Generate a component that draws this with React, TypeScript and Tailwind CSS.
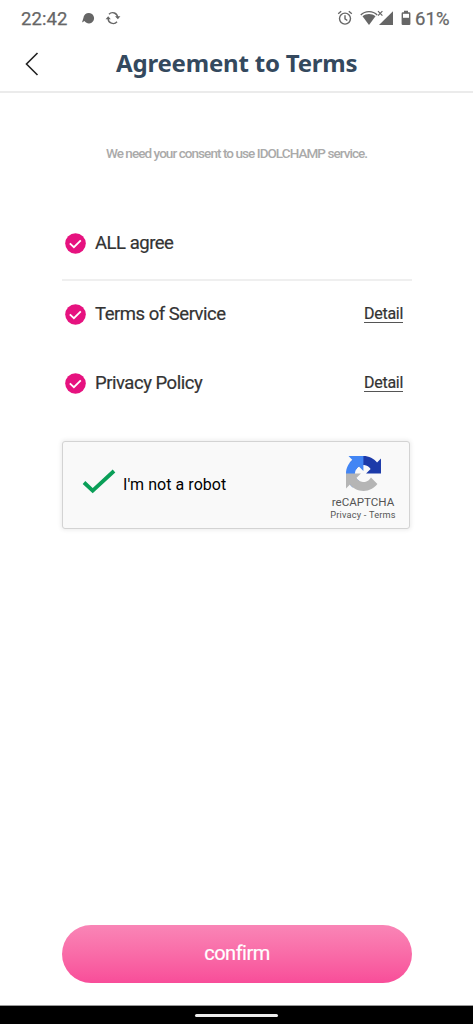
function StatusBar() {
  return (
    <div className="flex h-9 shrink-0 items-center pl-[21px] pr-[23px] text-[#666666]">
      <span className="mt-[2px] w-[61px] text-[18.5px] leading-none tracking-[0.1px] whitespace-nowrap [-webkit-text-stroke:0.25px]">22:42</span>
      <svg width="13" height="13" viewBox="0 0 13 13" fill="currentColor">
        <path d="M7 1a5.2 5.2 0 1 1-4.5 8L0 10.5 1.4 6A5.4 5.4 0 0 1 7 1Z" />
      </svg>
      <svg width="16" height="14" viewBox="0 0 16 14" fill="none" stroke="currentColor" strokeWidth="1.4" className="ml-[10px]">
        <path d="M4 3.2A5 5 0 0 1 12.6 6.5M12 10.8A5 5 0 0 1 3.2 7.3" />
        <path d="M10 5.2h5.4l-2.5 3ZM.6 8.2h5.2L3.2 5.3Z" fill="currentColor" stroke="none" />
      </svg>
      <div className="ml-auto flex items-center">
        <svg width="16" height="16" viewBox="0 0 16 16" fill="none" stroke="currentColor" strokeWidth="1.4">
          <circle cx="8" cy="8.6" r="5.5" />
          <path d="M8 5.2v3.6l2.3 1.7M1.2 3.8l3-2.5M14.8 3.8l-3-2.5" />
        </svg>
        <svg width="34" height="16" viewBox="0 0 34 16" fill="currentColor" className="ml-[7px]">
          <path d="M.8 5.1C5.2.5 12.8.5 17.2 5.1" fill="none" stroke="currentColor" strokeWidth="1.4" />
          <path d="M2.5 6.3C6.2 3.2 11.8 3.2 15.5 6.3L9 15Z" />
          <path d="M33 1.2V15H19Z" />
          <path d="M18 1.2l4.4 4.4M22.4 1.2L18 5.6" stroke="currentColor" strokeWidth="1.2" />
        </svg>
        <svg width="10" height="16" viewBox="0 0 10 16" className="ml-[7px]">
          <path d="M3 .8h4v1.5h1.2q1.2 0 1.2 1.2v10.3q0 1.2-1.2 1.2H1.8Q.6 15 .6 13.8V3.5q0-1.2 1.2-1.2H3Z" fill="currentColor" />
          <path d="M2 3.8h6v4H2Z" fill="white" />
        </svg>
        <span className="ml-[4px] mt-[2px] w-[35px] text-[18.5px] leading-none tracking-[0.1px] whitespace-nowrap [-webkit-text-stroke:0.25px]">61%</span>
      </div>
    </div>
  );
}

function CheckCircle() {
  return (
    <svg width="21" height="21" viewBox="0 0 21 21" className="-mt-px shrink-0">
      <circle cx="10.5" cy="10.5" r="10.3" fill="#e6127f" />
      <path d="M4.8 10.3l4.1 3.9 6.9-6.9" fill="none" stroke="white" strokeWidth="1.8" />
    </svg>
  );
}

function TermsRow({ label, detail = false }: { label: string; detail?: boolean }) {
  return (
    <div className="flex h-[30px] items-center pl-[3px] pr-[9px] text-[#333333]">
      <CheckCircle />
      <span className="ml-[9px] text-[18.5px] leading-[30px] tracking-[-0.48px] -mt-[2px] [-webkit-text-stroke:0.2px]">{label}</span>
      {detail && (
        <a className="-mr-px -mt-px ml-auto border-b-[1px] border-[#555555] text-[16px] leading-[16px] tracking-[-0.3px] [-webkit-text-stroke:0.2px]">Detail</a>
      )}
    </div>
  );
}

function RecaptchaLogo() {
  return (
    <svg width="35" height="35" viewBox="0 0 64 64">
      <path fill="#1c3aa9" d="M64 31.955l-.033-1.37V4.687l-7.16 7.16C50.948 4.674 42.033.093 32.05.093c-10.4 0-19.622 4.96-25.458 12.64l11.736 11.86a15.55 15.55 0 0 1 4.754-5.334c2.05-1.6 4.952-2.906 8.968-2.906.485 0 .86.057 1.135.163 4.976.393 9.288 3.14 11.828 7.124l-8.307 8.307L64 31.953" />
      <path fill="#4285f4" d="M31.862.094l-1.37.033H4.594l7.16 7.16C4.58 13.147 0 22.06 0 32.046c0 10.4 4.96 19.622 12.64 25.458L24.5 45.768a15.55 15.55 0 0 1-5.334-4.754c-1.6-2.05-2.906-4.952-2.906-8.968 0-.485.057-.86.163-1.135.393-4.976 3.14-9.288 7.124-11.828l8.307 8.307L31.86.095" />
      <path fill="#b5b5b5" d="M.001 32.045l.033 1.37v25.898l7.16-7.16c5.86 7.173 14.774 11.754 24.76 11.754 10.4 0 19.622-4.96 25.458-12.64l-11.736-11.86a15.55 15.55 0 0 1-4.754 5.334c-2.05 1.6-4.952 2.906-8.968 2.906-.485 0-.86-.057-1.135-.163-4.976-.393-9.288-3.14-11.828-7.124l8.307-8.307L0 32.047" />
    </svg>
  );
}

function Recaptcha() {
  return (
    <div className="flex h-[88px] w-[348px] rounded-[3px] border border-[#d3d3d3] bg-[#f9f9f9] shadow-[0_0_4px_1px_rgba(0,0,0,0.08)]">
      <svg width="34" height="28" viewBox="0 0 34 28" fill="none" className="ml-[19px] mt-[26px]">
        <path d="M2 14.5l8.7 8.2L32 3" stroke="#0a9f58" strokeWidth="3.8" />
      </svg>
      <span className="ml-[7px] mt-[33px] text-[16px] leading-5 tracking-[0.05px] text-black">I'm not a robot</span>
      <div className="ml-auto mr-[12px] mt-[14px] flex w-[68px] flex-col items-center whitespace-nowrap text-[#555555]">
        <RecaptchaLogo />
        <span className="mt-[3px] text-[11.6px] leading-4">reCAPTCHA</span>
        <span className="text-[9.2px] leading-[10px] tracking-[0.2px]">Privacy&nbsp;-&nbsp;Terms</span>
      </div>
    </div>
  );
}

export default function App() {
  return (
    <div className="flex h-[1024px] w-[473px] flex-col overflow-hidden bg-white font-[Roboto,sans-serif]">
      <StatusBar />
      <header className="flex h-[57px] shrink-0 items-center border-b-2 border-[#ebebeb]">
        <svg width="14" height="24" viewBox="0 0 14 24" fill="none" className="ml-[25px]">
          <path d="M12.5 1L1.5 12l11 11" stroke="#222222" strokeWidth="1.6" />
        </svg>
        <h1 className="-mt-[2px] ml-[77px] whitespace-nowrap font-['Noto_Sans',sans-serif] text-[24px] font-bold leading-none tracking-[-0.2px] text-[#34495e]">Agreement to Terms</h1>
      </header>

      <main className="flex grow flex-col px-[62px]">
        <p className="mt-[50px] text-center text-[13.5px] font-medium leading-5 tracking-[-0.94px] text-[#aaaaaa]">
          We need your consent to use IDOLCHAMP service.
        </p>
        <div className="mt-[66px]">
          <TermsRow label="ALL agree" />
        </div>
        <div className="mt-[20px] h-[2px] w-[350px] bg-[#efefef]" />
        <div className="mt-[19px] flex flex-col gap-[39px]">
          <TermsRow label="Terms of Service" detail />
          <TermsRow label="Privacy Policy" detail />
        </div>
        <div className="mt-[42px]">
          <Recaptcha />
        </div>
        <button className="mb-[22px] mt-auto h-[58px] w-[350px] rounded-full bg-linear-to-b from-[#f985b6] to-[#f84d99] pb-[2px] text-[20px] tracking-[-0.5px] text-white [-webkit-text-stroke:0.2px]">
          confirm
        </button>
      </main>

      <div className="flex h-[19px] shrink-0 items-center justify-center border-t border-[#999999] bg-black">
        <div className="h-[3px] w-[83px] rounded-full bg-[#eeeeee]" />
      </div>
    </div>
  );
}
